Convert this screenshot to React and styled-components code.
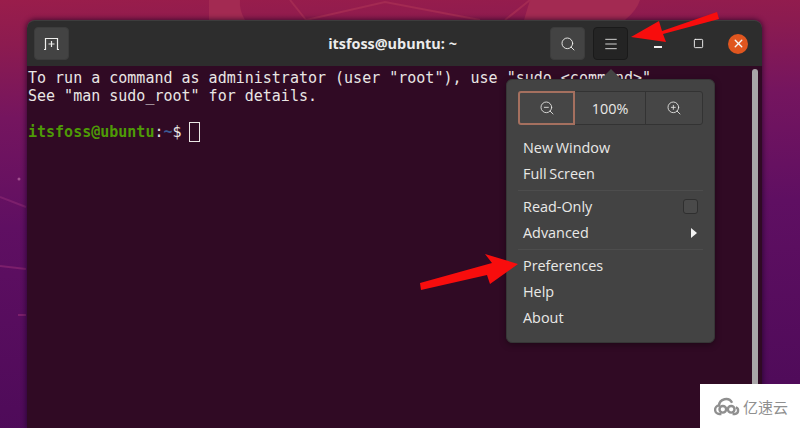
import React from 'react';
import styled, { createGlobalStyle } from 'styled-components';
import { Search, Menu, ZoomIn, ZoomOut, Square, X } from 'lucide-react';

const GlobalStyle = createGlobalStyle`
  html, body { margin: 0; padding: 0; height: 100%; overflow: hidden; }
  #root { height: 100%; }
  * { box-sizing: border-box; }
`;

const Desktop = styled.div`
  position: relative;
  width: 800px;
  height: 428px;
  overflow: hidden;
  padding: 20px 38px 0 27px;
  background: linear-gradient(178deg, #9a1d4b 0%, #8c1b50 10%, #75155f 26%, #5f0f62 50%, #4c0a58 100%);
`;

const Wallpaper = styled.svg`
  position: absolute;
  inset: 0;
`;

const Window = styled.div`
  position: relative;
  height: 100%;
  display: flex;
  flex-direction: column;
  border-radius: 8px 8px 0 0;
  overflow: visible;
  box-shadow: 0 0 5px 1px rgba(20, 0, 30, 0.6);
`;

const Header = styled.header`
  height: 46px;
  flex: none;
  display: flex;
  align-items: center;
  padding: 0 14px 0 7px;
  background: #2d2d2d;
  border-radius: 8px 8px 0 0;
  border-top: 1px solid #3d3d3d;
`;

const HeaderButton = styled.div`
  width: 35px;
  height: 33px;
  display: flex;
  align-items: center;
  justify-content: center;
  border-radius: 4px;
  color: #eeeeec;
  background: ${(p) => (p.$active ? '#242424' : '#434343')};
  border: 1px solid ${(p) => (p.$active ? '#1a1a1a' : '#3c3c3c')};
  margin-left: ${(p) => p.$gap || 0}px;
`;

const Title = styled.div`
  flex: 1;
  text-align: center;
  padding-left: 166px;
  font: bold 14.4px 'Open Sans', 'Noto Sans', sans-serif;
  color: #ececec;
`;

const WindowControl = styled.div`
  width: 20px;
  height: 20px;
  display: flex;
  align-items: center;
  justify-content: center;
  color: #f7f7f7;
  margin-left: ${(p) => p.$gap}px;
  border-radius: 50%;
  background: ${(p) => (p.$close ? '#e0561f' : 'transparent')};
`;

const MinimizeBar = styled.span`
  width: 8px;
  height: 2px;
  margin-top: 7px;
  background: #f2f2f2;
`;

const Terminal = styled.main`
  position: relative;
  flex: 1;
  padding: 3px 1px;
  background: #300a24;
  font: 15px/18px 'DejaVu Sans Mono', monospace;
  color: #e9e6e4;
  white-space: pre;
  overflow: hidden;
`;

const Line = styled.div`
  height: 18px;
`;

const PromptUser = styled.span`
  color: #4e9a06;
  font-weight: bold;
`;

const PromptPath = styled.span`
  color: #3b5a94;
  font-weight: bold;
`;

const Cursor = styled.span`
  display: inline-block;
  width: 11px;
  height: 20px;
  margin: -3px 0 -4px -2px;
  vertical-align: -1px;
  border: 1px solid #e9e6e4;
`;

const Scrollbar = styled.div`
  position: absolute;
  top: 3px;
  right: 4px;
  bottom: 0;
  width: 6px;
  border-radius: 3px 3px 0 0;
  background: #a9a5a8;
`;

const Popover = styled.nav`
  position: absolute;
  top: 59px;
  left: 479px;
  width: 209px;
  height: 264px;
  padding: 11px 11px 0;
  background: #434343;
  border: 1px solid #363636;
  border-radius: 6px;
  font: 14.4px 'Open Sans', 'Noto Sans', sans-serif;
  color: #e9e9e7;
  box-shadow: 0 2px 6px rgba(0, 0, 0, 0.35);

  &::before {
    content: '';
    position: absolute;
    top: -11px;
    left: 93px;
    border-left: 11px solid transparent;
    border-right: 11px solid transparent;
    border-bottom: 11px solid #434343;
  }
`;

const ZoomRow = styled.div`
  display: grid;
  grid-template-columns: 57px 71px 57px;
  height: 34px;
  margin-bottom: 10px;
`;

const ZoomCell = styled.div`
  display: flex;
  align-items: center;
  justify-content: center;
  margin-left: ${(p) => (p.$first ? 0 : -1)}px;
  background: #464646;
  border: 1px solid ${(p) => (p.$focus ? '#a5705f' : '#333333')};
  border-radius: ${(p) => (p.$first ? '3px 0 0 3px' : p.$last ? '0 3px 3px 0' : '0')};
  position: relative;
  z-index: ${(p) => (p.$focus ? 1 : 0)};
  ${(p) => p.$focus && 'border-width: 2px;'}
`;

const MenuItem = styled.div`
  height: 26px;
  padding: 0 5px 1px 5px;
  display: flex;
  align-items: center;
  justify-content: space-between;
  word-spacing: -1px;
`;

const Divider = styled.div`
  height: 1px;
  margin: 3px 0 3px;
  background: #4d4d4d;
`;

const Check = styled.span`
  width: 15px;
  height: 15px;
  border: 1px solid #2f2f2f;
  border-radius: 3px;
  background: #4a4a4a;
`;

const Chevron = styled.span`
  margin-right: 1px;
  border-top: 5px solid transparent;
  border-bottom: 5px solid transparent;
  border-left: 6px solid #f2f2f2;
`;

const Arrows = styled.svg`
  position: absolute;
  inset: 0;
  pointer-events: none;
`;

const Watermark = styled.div`
  position: absolute;
  right: 0;
  bottom: 0;
  width: 100px;
  height: 44px;
  display: flex;
  align-items: center;
  padding: 0 0 0 14px;
  gap: 3px;
  background: #ffffff;
  color: #8f8f8f;
  font: 15px 'Noto Sans CJK SC', sans-serif;
`;

const CloudLogo = () => (
  <svg width="26" height="19" viewBox="0 0 28 20" fill="none" stroke="#8f8f8f" strokeWidth="2.6">
    <path d="M8 18H6a4.5 4.5 0 0 1-.6-9A7.5 7.5 0 0 1 19.5 6" />
    <circle cx="9.5" cy="13" r="3.6" />
    <circle cx="18.5" cy="13" r="3.6" />
    <path d="M20 18h2.5a3.6 3.6 0 0 0 1-7" />
  </svg>
);

const NewTabIcon = () => (
  <svg width="17" height="14" viewBox="0 0 17 14" fill="none" stroke="#eeeeec" strokeWidth="1.2">
    <path d="M1 12.5h1.5V1.5h12V12.5H16" />
    <path d="M8.5 4v6M5.5 7h6" />
  </svg>
);

const menuGroups = [
  ['New Window', 'Full Screen'],
  ['Read-Only', 'Advanced'],
  ['Preferences', 'Help', 'About'],
];

const App = () => (
  <>
    <GlobalStyle />
    <Desktop>
      <Wallpaper width="800" height="428" viewBox="0 0 800 428" fill="none">
        <path d="M209 0v20h36q-6-10-5-20z" fill="#a32a52" />
        <path d="M530 0l-6 20h101q12-10 15-20z" fill="#a32a52" />
        <path d="M290 0l16 20M306 20l79-18 95 18M530 0l-25 20" stroke="#a32a52" strokeWidth="2" />
        <path d="M0 197l26 10M0 266l26 3M18 315h8" stroke="#7c1f6c" strokeWidth="2" />
        <circle cx="19" cy="179" r="1.5" fill="#a0508f" />
      </Wallpaper>
      <Window>
        <Header>
          <HeaderButton>
            <NewTabIcon />
          </HeaderButton>
          <Title>itsfoss@ubuntu: ~</Title>
          <HeaderButton>
            <Search size={16} strokeWidth={1.4} />
          </HeaderButton>
          <HeaderButton $active $gap={8}>
            <Menu size={16} strokeWidth={1.3} />
          </HeaderButton>
          <WindowControl $gap={20}>
            <MinimizeBar />
          </WindowControl>
          <WindowControl $gap={20}>
            <Square size={11} strokeWidth={2} />
          </WindowControl>
          <WindowControl $close $gap={20}>
            <X size={13} strokeWidth={2.6} />
          </WindowControl>
        </Header>
        <Terminal>
          <Line>To run a command as administrator (user "root"), use "sudo &lt;command&gt;"</Line>
          <Line>See "man sudo_root" for details.</Line>
          <Line />
          <Line>
            <PromptUser>itsfoss@ubuntu</PromptUser>:<PromptPath>~</PromptPath>$ <Cursor />
          </Line>
          <Scrollbar />
        </Terminal>
        <Popover>
          <ZoomRow>
            <ZoomCell $first $focus>
              <ZoomOut size={16} strokeWidth={1.3} />
            </ZoomCell>
            <ZoomCell>100%</ZoomCell>
            <ZoomCell $last>
              <ZoomIn size={16} strokeWidth={1.3} />
            </ZoomCell>
          </ZoomRow>
          {menuGroups.map((group, i) => (
            <React.Fragment key={group[0]}>
              {i > 0 && <Divider />}
              {group.map((label) => (
                <MenuItem key={label}>
                  {label}
                  {label === 'Read-Only' && <Check />}
                  {label === 'Advanced' && <Chevron />}
                </MenuItem>
              ))}
            </React.Fragment>
          ))}
        </Popover>
      </Window>
      <Arrows width="800" height="428" viewBox="0 0 800 428">
        <path d="M717 12L662 31l-3-10-28 16 35 5-3-8 56-15z" fill="#f80d0d" />
        <path d="M421 290l-1-7 72-20-7-9 33 10-28 20-3-9z" fill="#f80d0d" />
      </Arrows>
      <Watermark>
        <CloudLogo />
        亿速云
      </Watermark>
    </Desktop>
  </>
);

export default App;
